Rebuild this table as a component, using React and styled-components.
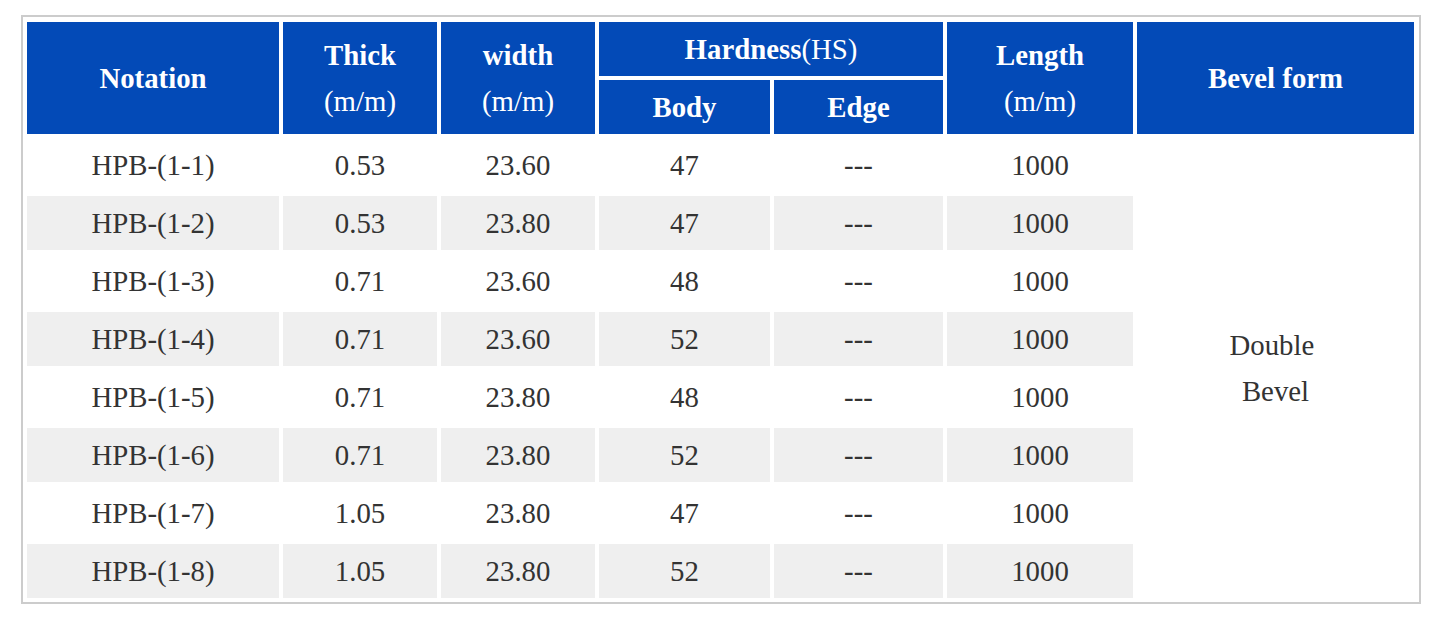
import React from 'react';
import styled, { createGlobalStyle } from 'styled-components';

const rows = [
  ['HPB-(1-1)', '0.53', '23.60', '47'],
  ['HPB-(1-2)', '0.53', '23.80', '47'],
  ['HPB-(1-3)', '0.71', '23.60', '48'],
  ['HPB-(1-4)', '0.71', '23.60', '52'],
  ['HPB-(1-5)', '0.71', '23.80', '48'],
  ['HPB-(1-6)', '0.71', '23.80', '52'],
  ['HPB-(1-7)', '1.05', '23.80', '47'],
  ['HPB-(1-8)', '1.05', '23.80', '52'],
];

const colWidths = [252, 154, 154, 171, 169, 186, 277];

const App = () => {
  return (
    <>
      <GlobalStyle />
      <Frame>
        <Table>
          <colgroup>
            {colWidths.map((w, i) => (
              <col key={i} style={{ width: w }} />
            ))}
          </colgroup>
          <thead>
            <tr>
              <Head rowSpan={2}>Notation</Head>
              <Head rowSpan={2}>
                Thick
                <br />
                <Unit>(m/m)</Unit>
              </Head>
              <Head rowSpan={2}>
                width
                <br />
                <Unit>(m/m)</Unit>
              </Head>
              <Head colSpan={2}>
                Hardness<Unit>(HS)</Unit>
              </Head>
              <Head rowSpan={2}>
                Length
                <br />
                <Unit>(m/m)</Unit>
              </Head>
              <Head rowSpan={2}>Bevel form</Head>
            </tr>
            <tr>
              <Head>Body</Head>
              <Head>Edge</Head>
            </tr>
          </thead>
          <tbody>
            {rows.map((r, i) => (
              <tr key={r[0]}>
                <Cell $shaded={i % 2 === 1}>{r[0]}</Cell>
                <Cell $shaded={i % 2 === 1}>{r[1]}</Cell>
                <Cell $shaded={i % 2 === 1}>{r[2]}</Cell>
                <Cell $shaded={i % 2 === 1}>{r[3]}</Cell>
                <Cell $shaded={i % 2 === 1}>---</Cell>
                <Cell $shaded={i % 2 === 1}>1000</Cell>
                {i === 0 && (
                  <Cell rowSpan={rows.length}>
                    Double&nbsp;
                    <br />
                    Bevel
                  </Cell>
                )}
              </tr>
            ))}
          </tbody>
        </Table>
      </Frame>
    </>
  );
};

const GlobalStyle = createGlobalStyle`
  body {
    margin: 0;
    background: #fff;
    font-family: "Liberation Serif", "Times New Roman", serif;
  }
`;

const Frame = styled.div`
  box-sizing: border-box;
  width: 1400px;
  margin: 15px 0 0 21px;
  border: 2px solid #cccccc;
  padding: 1px 1px 0 0;
`;

const Table = styled.table`
  width: 100%;
  table-layout: fixed;
  border-collapse: separate;
  border-spacing: 4px;
  font-size: 28.8px;
  line-height: 46px;
`;

const Head = styled.th`
  height: 54px;
  padding: 0;
  background: #034ab7;
  color: #fff;
  font-weight: bold;
  text-align: center;
  vertical-align: middle;
`;

const Unit = styled.span`
  font-weight: normal;
`;

const Cell = styled.td`
  height: 54px;
  padding: 0;
  background: ${p => (p.$shaded ? '#efefef' : '#fff')};
  color: #333;
  text-align: center;
  vertical-align: middle;
`;

export default App;
